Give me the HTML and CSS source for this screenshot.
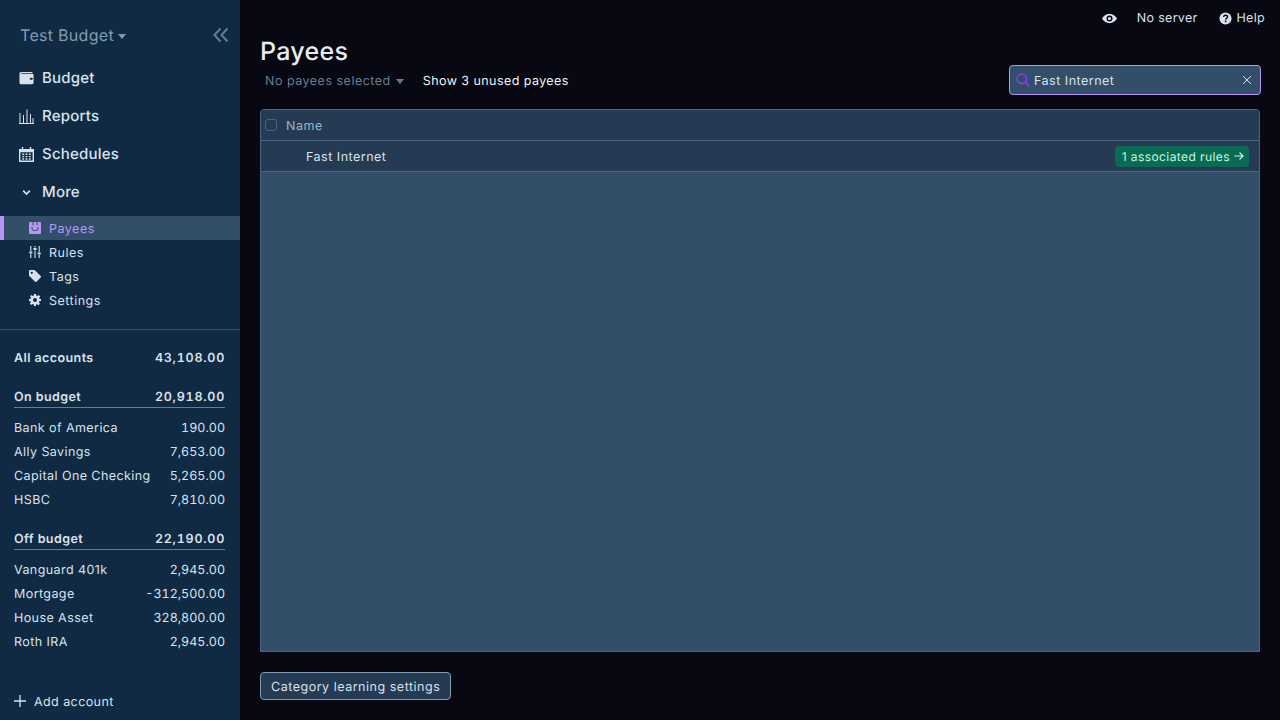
FILE: index.html
```html
<!DOCTYPE html>
<html lang="en">
<head>
  <meta charset="UTF-8">
  <title>Payees</title>
  <link rel="stylesheet" href="styles.css">
</head>
<body>
  <div class="app">
    <aside class="sidebar">
      <div class="budget-head">
        <div class="budget-name">Test Budget<span class="caret"></span></div>
        <svg class="collapse" width="16" height="16" viewBox="0 0 16 16" fill="none" stroke="currentColor" stroke-width="2"><path d="M7.500 1.500 1.500 8l6 6.500M14.500 1.500 8.500 8l6 6.500"/></svg>
      </div>

      <nav class="main-nav">
        <div class="nav-item">
          <svg width="15" height="15" viewBox="0 0 16 16" fill="currentColor"><path d="M2 1h11.500a1 1 0 0 1 1 1.200H2.500v.6H14A1.500 1.500 0 0 1 15.500 4.300v8.200a1.500 1.500 0 0 1-1.500 1.500H2A1.500 1.500 0 0 1 .5 12.500v-9.500A2 2 0 0 1 2 1zm10.500 6.200a1.100 1.100 0 1 0 0 2.200h1.100a1.100 1.100 0 0 0 0-2.200z" fill-rule="evenodd"/></svg>
          <span>Budget</span>
        </div>
        <div class="nav-item">
          <svg width="15" height="15" viewBox="0 0 15 15" fill="none" stroke="currentColor" stroke-width="1"><path d="M0 14.500h15M1 4v10.500M4.500 6v8.500M8 .5v14M11.500 5v9.500M14 9v5.500"/></svg>
          <span>Reports</span>
        </div>
        <div class="nav-item">
          <svg width="15" height="15" viewBox="0 0 16 16" fill="currentColor"><path fill-rule="evenodd" d="M3 0h1.500v2h7V0H13v2h3v14H0V2h3zM1.500 5.500v9h13v-9z"/><path d="M3.500 7h2v1.500h-2zM7 7h2v1.500H7zM10.500 7h2v1.500h-2zM3.500 9.500h2V11h-2zM7 9.500h2V11H7zM10.500 9.500h2V11h-2zM3.500 12h2v1.500h-2zM7 12h2v1.500H7zM10.500 12h2v1.500h-2z"/></svg>
          <span>Schedules</span>
        </div>
        <div class="nav-item">
          <svg class="chev" width="15" height="15" viewBox="0 0 16 16" fill="none" stroke="currentColor" stroke-width="1.700"><path d="M4.500 6 8 9.700 11.500 6"/></svg>
          <span>More</span>
        </div>
      </nav>

      <div class="sub-nav">
        <div class="sub-item active">
          <svg width="12" height="12" viewBox="0 0 12 12" fill="currentColor"><path fill-rule="evenodd" d="M1 0h2.500v3.200H4.500V0h3v3.200h1V0H11a1 1 0 0 1 1 1v10a1 1 0 0 1-1 1H1a1 1 0 0 1-1-1V1a1 1 0 0 1 1-1zm1.500 5v1.500C2.500 8 4 9 6 9s3.500-1 3.500-2.500V5H8.500v1.500C8.500 7.500 7.300 8 6 8S3.500 7.500 3.500 6.500V5z"/></svg>
          <span>Payees</span>
        </div>
        <div class="sub-item">
          <svg width="12" height="12" viewBox="0 0 12 12" fill="none" stroke="currentColor" stroke-width="1.100"><path d="M1.800 0v5M1.800 8v4M6 0v1.500M6 4.500V12M10.200 0v6M10.200 9v3"/><path d="M.3 6.500h3M4.500 3h3M8.700 7.500h3" stroke-width="2.200"/></svg>
          <span>Rules</span>
        </div>
        <div class="sub-item">
          <svg width="12" height="12" viewBox="0 0 12 12" fill="currentColor"><path fill-rule="evenodd" d="M0 1v4.200c0 .3.100.5.300.7l5.800 5.800c.4.400 1 .4 1.400 0l4.200-4.200c.4-.4.400-1 0-1.400L5.900.3A1 1 0 0 0 5.200 0H1a1 1 0 0 0-1 1zm2.800 2.900a1.100 1.100 0 1 0 0-2.200 1.100 1.100 0 0 0 0 2.200z"/></svg>
          <span>Tags</span>
        </div>
        <div class="sub-item">
          <svg width="12" height="12" viewBox="0 0 12 12" fill="currentColor"><path fill-rule="evenodd" d="M5 0h2l.3 1.700 1 .4L9.800 1.100l1.400 1.400-1 1.500.4 1L12 5v2l-1.700.3-.4 1 1 1.500-1.400 1.400-1.500-1-1 .4L7 12H5l-.3-1.700-1-.4-1.500 1L.8 9.500l1-1.500-.4-1L0 7V5l1.700-.3.4-1-1-1.500L2.200 1.100l1.500 1 1-.4zM6 8a2 2 0 1 0 0-4 2 2 0 0 0 0 4z"/></svg>
          <span>Settings</span>
        </div>
      </div>

      <div class="accounts">
        <div class="acct-row total"><span>All accounts</span><span class="amt">43,108.00</span></div>

        <div class="acct-row group"><span>On budget</span><span class="amt">20,918.00</span></div>
        <div class="acct-row"><span>Bank of America</span><span class="amt">190.00</span></div>
        <div class="acct-row"><span>Ally Savings</span><span class="amt">7,653.00</span></div>
        <div class="acct-row"><span>Capital One Checking</span><span class="amt">5,265.00</span></div>
        <div class="acct-row"><span>HSBC</span><span class="amt">7,810.00</span></div>

        <div class="acct-row group"><span>Off budget</span><span class="amt">22,190.00</span></div>
        <div class="acct-row"><span>Vanguard 401k</span><span class="amt">2,945.00</span></div>
        <div class="acct-row"><span>Mortgage</span><span class="amt">-312,500.00</span></div>
        <div class="acct-row"><span>House Asset</span><span class="amt">328,800.00</span></div>
        <div class="acct-row"><span>Roth IRA</span><span class="amt">2,945.00</span></div>
      </div>

      <div class="add-account">
        <svg width="12" height="12" viewBox="0 0 12 12" fill="none" stroke="currentColor" stroke-width="1.300"><path d="M6 0v12M0 6h12"/></svg>
        <span>Add account</span>
      </div>
    </aside>

    <main class="content">
      <div class="topbar">
        <svg class="eye" width="15" height="15" viewBox="0 0 16 16" fill="currentColor"><path fill-rule="evenodd" d="M8 3c3.600 0 6.500 2.300 8 5-1.500 2.700-4.400 5-8 5S1.500 10.700 0 8c1.500-2.700 4.400-5 8-5zm0 8.200a3.200 3.200 0 1 0 0-6.400 3.200 3.200 0 0 0 0 6.400zM8 6.300a1.700 1.700 0 1 1 0 3.400 1.700 1.700 0 0 1 0-3.400z"/></svg>
        <span class="no-server">No server</span>
        <div class="help">
          <svg width="13" height="13" viewBox="0 0 14 14"><circle cx="7" cy="7" r="6.500" fill="currentColor"/><path d="M4.900 5.400C5 4.200 5.900 3.500 7.100 3.500c1.200 0 2.100.8 2.100 1.800 0 1.500-2 1.500-2 3" fill="none" stroke="#070811" stroke-width="1.500"/><rect x="6.300" y="9.300" width="1.700" height="1.600" fill="#070811"/></svg>
          <span>Help</span>
        </div>
      </div>

      <h1>Payees</h1>

      <div class="toolbar">
        <div class="toolbar-left">
          <span class="bulk">No payees selected<span class="caret"></span></span>
          <span class="show-unused">Show 3 unused payees</span>
        </div>
        <div class="search">
          <svg class="search-icon" width="14" height="14" viewBox="0 0 14 14" fill="none" stroke="currentColor" stroke-width="1.500"><circle cx="5.800" cy="5.800" r="4.800"/><path d="m9.300 9.300 4.300 4.300"/></svg>
          <span class="search-text">Fast Internet</span>
          <svg width="10" height="10" viewBox="0 0 10 10" fill="none" stroke="currentColor" stroke-width="1"><path d="m1 1 8 8M9 1 1 9"/></svg>
        </div>
      </div>

      <div class="table">
        <div class="table-row table-head">
          <span class="checkbox"></span>
          <span class="cell-text">Name</span>
        </div>
        <div class="table-row payee-row">
          <span class="cell-text">Fast Internet</span>
          <span class="rules-badge">1 associated rules
            <svg width="10" height="10" viewBox="0 0 10 10" fill="none" stroke="currentColor" stroke-width="1.100"><path d="M.5 5h8.500M5.500 1.500 9 5 5.500 8.500"/></svg>
          </span>
        </div>
      </div>

      <div class="footer">
        <button class="learn-btn">Category learning settings</button>
      </div>
    </main>
  </div>
</body>
</html>
```

FILE: styles.css
```css
* {
  box-sizing: border-box;
}
html, body {
  margin: 0;
  height: 100%;
}
body {
  font-family: Inter, "Noto Sans", sans-serif;
  font-size: 12.5px;
  letter-spacing: 0.5px;
  line-height: 15px;
  text-rendering: geometricPrecision;
  background: #070811;
  color: #d9e2ec;
  overflow: hidden;
}
.app {
  display: flex;
  height: 720px;
}
.caret {
  display: inline-block;
  width: 0;
  height: 0;
  border-left: 4px solid transparent;
  border-right: 4px solid transparent;
  border-top: 5px solid currentColor;
  vertical-align: 1px;
  margin-left: 5px;
}

/* sidebar */
.sidebar {
  width: 240px;
  flex: none;
  background: #102a43;
  display: flex;
  flex-direction: column;
}
.budget-head {
  display: flex;
  justify-content: space-between;
  align-items: center;
  padding: 24px 11px 0 20px;
  height: 46px;
  color: #829ab1;
}
.budget-name {
  font-size: 16px;
  letter-spacing: 0.3px;
  line-height: 20px;
}
.budget-name .caret {
  margin-left: 4px;
  vertical-align: 2px;
}
.collapse {
  color: #627d98;
}
.main-nav {
  padding-top: 13px;
}
.nav-item {
  display: flex;
  align-items: center;
  gap: 8px;
  height: 38px;
  padding-left: 19px;
  font-size: 15px;
  letter-spacing: 0.2px;
  font-weight: 500;
  color: #d9e2ec;
}
.nav-item span {
  padding-bottom: 2px;
}
.sub-nav {
  padding: 5px 0 17px;
  border-bottom: 1px solid #334e68;
}
.sub-item {
  display: flex;
  align-items: center;
  gap: 8px;
  height: 24px;
  padding-left: 29px;
  color: #d9e2ec;
}
.sub-item span {
  padding-top: 2px;
}
.sub-item.active {
  background: #334e68;
  color: #b794f6;
  border-left: 4px solid #b794f6;
  padding-left: 25px;
}
.accounts {
  padding: 16px 15px 0 14px;
  letter-spacing: 0.42px;
}
.acct-row {
  display: flex;
  justify-content: space-between;
  align-items: center;
  height: 24px;
}
.amt {
  font-variant-numeric: tabular-nums;
  letter-spacing: 0;
}
.acct-row.total {
  font-weight: 600;
  margin-bottom: 15px;
}
.acct-row.group {
  font-weight: 600;
  height: 23px;
  padding-top: 2px;
  margin-bottom: 8px;
  border-bottom: 1px solid #627d98;
}
.total .amt,
.group .amt {
  letter-spacing: 0.75px;
}
.acct-row.group ~ .acct-row.group {
  margin-top: 15px;
}
.add-account {
  margin-top: auto;
  display: flex;
  align-items: center;
  gap: 8px;
  height: 38px;
  padding-left: 14px;
}
.add-account span {
  padding-top: 2px;
  letter-spacing: 0.42px;
}

/* main column */
.content {
  flex: 1;
  display: flex;
  flex-direction: column;
  padding: 0 20px;
  min-width: 0;
}
.topbar {
  display: flex;
  justify-content: flex-end;
  align-items: center;
  height: 36px;
  margin-right: -5px;
  gap: 21px;
  letter-spacing: 0.3px;
}
.eye {
  margin-right: -1px;
}
.help {
  display: flex;
  align-items: center;
  gap: 5px;
}
h1 {
  margin: 1px 0 0;
  font-size: 25px;
  font-weight: 500;
  letter-spacing: 0.3px;
  line-height: 30px;
  color: #e8ecf0;
}
.toolbar {
  display: flex;
  justify-content: space-between;
  align-items: center;
  height: 30px;
  margin-top: -2px;
}
.toolbar-left {
  display: flex;
  gap: 19px;
  padding: 2px 0 0 5px;
}
.bulk {
  color: #627d98;
}
.show-unused {
  color: #f0f4f8;
  letter-spacing: 0.43px;
}
.search {
  width: 252px;
  height: 30px;
  margin-right: -1px;
  display: flex;
  align-items: center;
  gap: 4px;
  padding: 0 8px 0 6px;
  background: #334e68;
  border: 1px solid #b794f6;
  border-radius: 4px;
}
.search-icon {
  color: #8a3ff0;
  flex: none;
}
.search-text {
  flex: 1;
  padding-top: 2px;
}
.table {
  flex: none;
  height: 543px;
  margin-top: 14px;
  background: #334e68;
  border: 1px solid #486581;
  border-radius: 4px 4px 0 0;
  overflow: hidden;
}
.table-row {
  display: flex;
  align-items: center;
  height: 31px;
  background: #243b53;
  border-bottom: 1px solid #486581;
}
.cell-text {
  padding-top: 2px;
}
.table-head {
  padding-left: 4px;
  gap: 9px;
  color: #9fb3c8;
}
.checkbox {
  width: 12px;
  height: 12px;
  border: 1px solid #486581;
  border-radius: 3px;
  background: #243b53;
}
.payee-row {
  justify-content: space-between;
  padding: 0 10px 0 45px;
}
.rules-badge {
  display: flex;
  align-items: center;
  gap: 4px;
  height: 21px;
  padding: 0 5px 0 7px;
  font-size: 12px;
  letter-spacing: 0.42px;
  background: #0a6b55;
  color: #c6f7e2;
  border-radius: 4px;
}
.footer {
  padding-top: 20px;
}
.learn-btn {
  font: inherit;
  letter-spacing: 0.52px;
  text-rendering: inherit;
  height: 28px;
  padding: 2px 10px 0;
  background: #243b53;
  color: #d9e2ec;
  border: 1px solid #829ab1;
  border-radius: 4px;
}
```
